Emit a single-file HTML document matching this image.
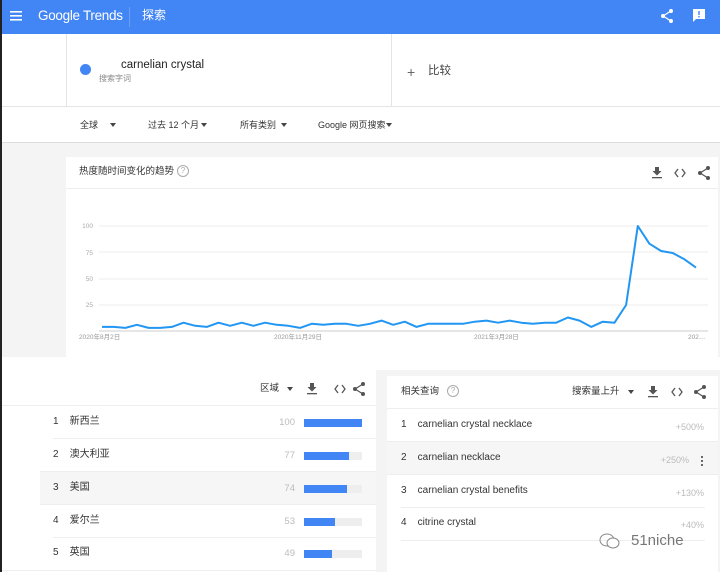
<!DOCTYPE html>
<html><head><meta charset="utf-8"><style>
*{margin:0;padding:0;box-sizing:border-box}
body{width:720px;height:572px;overflow:hidden;background:#f4f4f4;font-family:"Liberation Sans","Noto Sans CJK SC",sans-serif;position:relative;color:#333;line-height:1.2}
.a{position:absolute}
.t{font-size:10px;color:#333}
.g{color:#bbb}
.ic{fill:#555}
.tri{position:absolute;width:0;height:0;border-left:3.5px solid transparent;border-right:3.5px solid transparent;border-top:4px solid #444}
</style></head><body>
<div class="a" style="left:0;top:0;width:720px;height:34px;background:#4285f4"></div>
<div class="a" style="left:0;top:0;width:2px;height:572px;background:#222;z-index:5"></div>
<svg class="a" style="left:10px;top:11px" width="12" height="10"><rect y="0" width="12" height="1.6" fill="#fff"/><rect y="4" width="12" height="1.6" fill="#fff"/><rect y="8" width="12" height="1.6" fill="#fff"/></svg>
<div class="a" style="left:38px;top:8px;color:#fff;font-size:13.5px;letter-spacing:-0.3px">Google Trends</div>
<div class="a" style="left:129px;top:7px;width:1px;height:20px;background:#6b9ef6"></div>
<div class="a" style="left:142px;top:8px;color:#fff;font-size:12px">探索</div>
<svg class="a" style="left:661px;top:9px" width="12" height="14"><circle cx="10" cy="2" r="2" fill="#fff"/><circle cx="2" cy="7" r="2" fill="#fff"/><circle cx="10" cy="12" r="2" fill="#fff"/><path d="M10 2L2 7L10 12" stroke="#fff" stroke-width="1.3" fill="none"/></svg>
<svg class="a" style="left:693px;top:9px" width="12" height="13"><path d="M0 0H12V10H3L0 13Z" fill="#fff"/><rect x="5.3" y="2" width="1.4" height="4" fill="#4285f4"/><rect x="5.3" y="7" width="1.4" height="1.4" fill="#4285f4"/></svg>
<!-- search area -->
<div class="a" style="left:2px;top:34px;width:718px;height:109px;background:#fff"></div>
<div class="a" style="left:66px;top:34px;width:1px;height:72px;background:#e4e4e4"></div>
<div class="a" style="left:391px;top:34px;width:1px;height:72px;background:#e4e4e4"></div>
<div class="a" style="left:2px;top:106px;width:718px;height:1px;background:#e4e4e4"></div>
<div class="a" style="left:80px;top:64px;width:11px;height:11px;border-radius:50%;background:#4285f4"></div>
<div class="a" style="left:121px;top:59px;font-size:11.5px;color:#222">carnelian crystal</div>
<div class="a" style="left:99px;top:74px;font-size:8px;color:#888">搜索字词</div>
<div class="a" style="left:407px;top:64px;font-size:14px;color:#666">+</div>
<div class="a" style="left:428px;top:65px;font-size:11.5px;color:#444">比较</div>
<div class="a t" style="left:80px;top:120px;font-size:9px">全球</div><div class="tri" style="left:110px;top:123px"></div>
<div class="a t" style="left:148px;top:120px;font-size:9px">过去 12 个月</div><div class="tri" style="left:201px;top:123px"></div>
<div class="a t" style="left:240px;top:120px;font-size:9px">所有类别</div><div class="tri" style="left:281px;top:123px"></div>
<div class="a t" style="left:318px;top:120px;font-size:9px">Google 网页搜索</div><div class="tri" style="left:386px;top:123px"></div>
<div class="a" style="left:2px;top:142px;width:718px;height:1px;background:#ddd"></div>
<!-- chart card -->
<div class="a" style="left:66px;top:157px;width:652px;height:200px;background:#fff"></div>
<div class="a" style="left:66px;top:188px;width:652px;height:1px;background:#eee"></div>
<div class="a" style="left:79px;top:166px;font-size:9.5px;color:#333">热度随时间变化的趋势</div>
<div class="a" style="left:177px;top:165px;width:12px;height:12px;border:1px solid #aaa;border-radius:50%;font-size:8px;color:#aaa;text-align:center;line-height:10px">?</div>
<svg class="a" style="left:651px;top:166px" width="60" height="14">
<path d="M3 1h4v4h2.5L5 9.5 0.5 5H3z" class="ic" transform="translate(1,0)"/><rect x="1" y="11" width="10" height="1.3" class="ic"/>
<path d="M27 3L24 7L27 11M31 3L34 7L31 11" stroke="#555" stroke-width="1.3" fill="none"/>
<circle cx="57" cy="2" r="2" class="ic"/><circle cx="49" cy="7" r="2" class="ic"/><circle cx="57" cy="12" r="2" class="ic"/><path d="M57 2L49 7L57 12" stroke="#555" stroke-width="1.2" fill="none"/>
</svg>
<svg class="a" style="left:66px;top:200px" width="652" height="150">
<g stroke="#eee" stroke-width="1"><line x1="33" y1="26" x2="642" y2="26"/><line x1="33" y1="52" x2="642" y2="52"/><line x1="33" y1="79" x2="642" y2="79"/><line x1="33" y1="105" x2="642" y2="105"/></g>
<line x1="33" y1="131" x2="642" y2="131" stroke="#ccc"/>
<g font-size="6.5" fill="#aaa" font-family="Liberation Sans" text-anchor="end"><text x="27" y="28">100</text><text x="27" y="55">75</text><text x="27" y="81">50</text><text x="27" y="107">25</text></g>
<g font-size="6.5" fill="#999" font-family="Liberation Sans,Noto Sans CJK SC"><text x="13" y="139">2020年8月2日</text><text x="208" y="139">2020年11月29日</text><text x="408" y="139">2021年3月28日</text><text x="622" y="139">202…</text></g>
<polyline transform="translate(-66,-200)" fill="none" stroke="#2196f3" stroke-width="2" stroke-linejoin="round" points="102,326.9 113.6,326.9 125.3,327.9 136.9,324.8 148.6,327.9 160.2,327.9 171.9,326.9 183.5,322.7 195.2,325.8 206.8,326.9 218.5,322.7 230.1,325.8 241.8,322.7 253.4,325.8 265.1,322.7 276.7,324.8 288.4,325.8 300,327.9 311.6,323.8 323.3,324.8 334.9,323.8 346.6,323.8 358.2,325.8 369.9,323.8 381.5,320.6 393.2,324.8 404.8,321.7 416.5,326.9 428.1,323.8 439.8,323.8 451.4,323.8 463.1,323.8 474.7,321.7 486.4,320.6 498,322.7 509.6,320.6 521.3,322.7 532.9,323.8 544.6,322.7 556.2,322.7 567.9,317.5 579.5,320.6 591.2,326.9 602.8,321.7 614.5,322.7 626.1,305 637.8,226 649.4,243.7 661.1,251 672.7,253 684.4,259.3 696,267.6"/>
</svg>
<!-- bottom -->
<div class="a" style="left:2px;top:357px;width:718px;height:19px;background:#fff"></div>
<div class="a" style="left:2px;top:357px;width:374px;height:215px;background:#fff"></div>
<div class="a" style="left:2px;top:405px;width:374px;height:1px;background:#eee"></div>
<div class="a" style="left:260px;top:383px;font-size:9.5px">区域</div><div class="tri" style="left:287px;top:387px"></div>
<svg class="a" style="left:306px;top:382px" width="60" height="14">
<path d="M3 1h4v4h2.5L5 9.5 0.5 5H3z" class="ic" transform="translate(1,0)"/><rect x="1" y="11" width="10" height="1.3" class="ic"/>
<path d="M32 3L29 7L32 11M36 3L39 7L36 11" stroke="#555" stroke-width="1.3" fill="none"/>
<circle cx="57" cy="2" r="2" class="ic"/><circle cx="49" cy="7" r="2" class="ic"/><circle cx="57" cy="12" r="2" class="ic"/><path d="M57 2L49 7L57 12" stroke="#555" stroke-width="1.2" fill="none"/>
</svg>
<div class="a" style="left:40px;top:471px;width:336px;height:33px;background:#f6f6f6"></div>
<div class="a" style="left:53px;top:438px;width:323px;height:1px;background:#eee"></div>
<div class="a" style="left:40px;top:471px;width:336px;height:1px;background:#eee"></div>
<div class="a" style="left:40px;top:504px;width:336px;height:1px;background:#eee"></div>
<div class="a" style="left:53px;top:537px;width:323px;height:1px;background:#eee"></div>
<div class="a" style="left:2px;top:570px;width:374px;height:1px;background:#eee"></div>
<div class="a t" style="left:53px;top:416px">1&nbsp;&nbsp;&nbsp;&nbsp;新西兰</div><div class="a g" style="left:270px;top:417px;width:25px;text-align:right;font-size:9.5px">100</div>
<div class="a" style="left:304px;top:419px;width:58px;height:8px;background:#eee"><div style="width:100%;height:100%;background:#4285f4"></div></div>
<div class="a t" style="left:53px;top:449px">2&nbsp;&nbsp;&nbsp;&nbsp;澳大利亚</div><div class="a g" style="left:270px;top:450px;width:25px;text-align:right;font-size:9.5px">77</div>
<div class="a" style="left:304px;top:452px;width:58px;height:8px;background:#eee"><div style="width:77%;height:100%;background:#4285f4"></div></div>
<div class="a t" style="left:53px;top:482px">3&nbsp;&nbsp;&nbsp;&nbsp;美国</div><div class="a g" style="left:270px;top:483px;width:25px;text-align:right;font-size:9.5px">74</div>
<div class="a" style="left:304px;top:485px;width:58px;height:8px;background:#eee"><div style="width:74%;height:100%;background:#4285f4"></div></div>
<div class="a t" style="left:53px;top:515px">4&nbsp;&nbsp;&nbsp;&nbsp;爱尔兰</div><div class="a g" style="left:270px;top:516px;width:25px;text-align:right;font-size:9.5px">53</div>
<div class="a" style="left:304px;top:518px;width:58px;height:8px;background:#eee"><div style="width:53%;height:100%;background:#4285f4"></div></div>
<div class="a t" style="left:53px;top:547px">5&nbsp;&nbsp;&nbsp;&nbsp;英国</div><div class="a g" style="left:270px;top:548px;width:25px;text-align:right;font-size:9.5px">49</div>
<div class="a" style="left:304px;top:550px;width:58px;height:8px;background:#eee"><div style="width:49%;height:100%;background:#4285f4"></div></div>
<!-- right card -->
<div class="a" style="left:376px;top:370px;width:344px;height:202px;background:#f4f4f4"></div>
<div class="a" style="left:387px;top:376px;width:331px;height:196px;background:#fff"></div>
<div class="a" style="left:387px;top:408px;width:331px;height:1px;background:#eee"></div>
<div class="a" style="left:387px;top:441px;width:331px;height:33px;background:#f6f6f6"></div>
<div class="a" style="left:387px;top:441px;width:331px;height:1px;background:#eee"></div>
<div class="a" style="left:387px;top:474px;width:331px;height:1px;background:#eee"></div>
<div class="a" style="left:401px;top:507px;width:304px;height:1px;background:#eee"></div>
<div class="a" style="left:401px;top:540px;width:304px;height:1px;background:#eee"></div>
<div class="a t" style="left:401px;top:386px;font-size:9.5px">相关查询</div>
<div class="a" style="left:447px;top:385px;width:12px;height:12px;border:1px solid #aaa;border-radius:50%;font-size:8px;color:#aaa;text-align:center;line-height:10px">?</div>
<div class="a t" style="left:572px;top:386px;font-size:9.5px">搜索量上升</div><div class="tri" style="left:628px;top:390px"></div>
<svg class="a" style="left:647px;top:385px" width="60" height="14">
<path d="M3 1h4v4h2.5L5 9.5 0.5 5H3z" class="ic" transform="translate(1,0)"/><rect x="1" y="11" width="10" height="1.3" class="ic"/>
<path d="M28 3L25 7L28 11M32 3L35 7L32 11" stroke="#555" stroke-width="1.3" fill="none"/>
<circle cx="57" cy="2" r="2" class="ic"/><circle cx="49" cy="7" r="2" class="ic"/><circle cx="57" cy="12" r="2" class="ic"/><path d="M57 2L49 7L57 12" stroke="#555" stroke-width="1.2" fill="none"/>
</svg>
<div class="a t" style="left:401px;top:419px">1&nbsp;&nbsp;&nbsp;&nbsp;carnelian crystal necklace</div><div class="a g" style="left:660px;top:422px;width:44px;text-align:right;font-size:9px">+500%</div>
<div class="a t" style="left:401px;top:452px">2&nbsp;&nbsp;&nbsp;&nbsp;carnelian necklace</div><div class="a g" style="left:645px;top:455px;width:44px;text-align:right;font-size:9px">+250%</div>
<div class="a" style="left:701px;top:455px;width:2px;height:12px;background:radial-gradient(circle,#444 0.9px,transparent 1.1px) 0 0/2px 4px"></div>
<div class="a t" style="left:401px;top:485px">3&nbsp;&nbsp;&nbsp;&nbsp;carnelian crystal benefits</div><div class="a g" style="left:660px;top:488px;width:44px;text-align:right;font-size:9px">+130%</div>
<div class="a t" style="left:401px;top:517px">4&nbsp;&nbsp;&nbsp;&nbsp;citrine crystal</div><div class="a g" style="left:660px;top:520px;width:44px;text-align:right;font-size:9px">+40%</div>
<svg class="a" style="left:599px;top:532px" width="22" height="18"><ellipse cx="8" cy="8" rx="7" ry="6" fill="none" stroke="#888" stroke-width="1"/><ellipse cx="14" cy="11" rx="6" ry="5" fill="#fff" stroke="#888" stroke-width="1"/></svg>
<div class="a" style="left:631px;top:532px;font-size:15px;color:#777;text-shadow:0 0 1px #fff">51niche</div>
</body></html>
